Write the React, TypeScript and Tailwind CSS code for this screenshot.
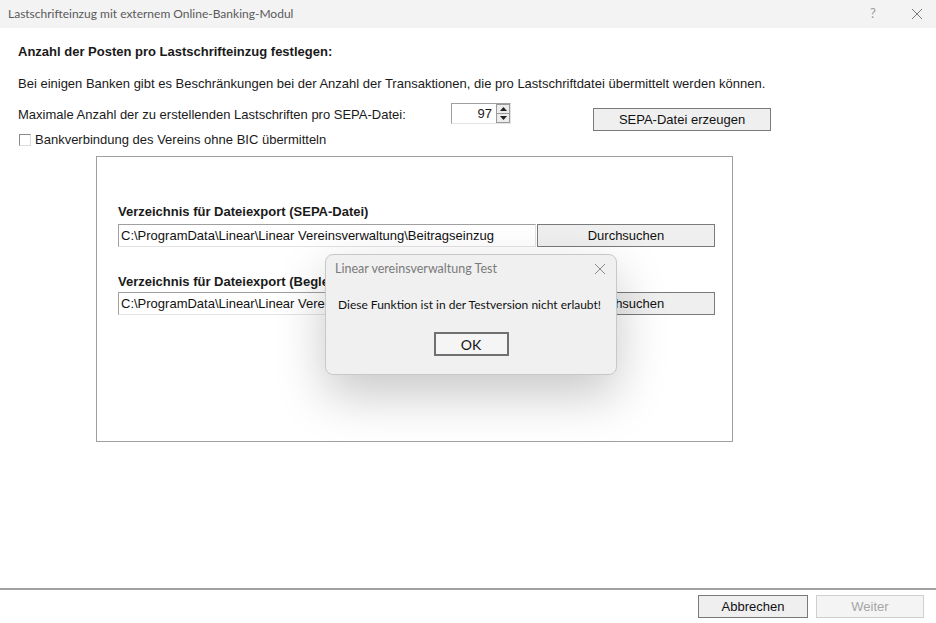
import React from "react";

const arial = { fontFamily: '"Liberation Sans", Arial, sans-serif' };
const segoe = { fontFamily: 'Lato, "Noto Sans", sans-serif' };

function WinButton({ children, className = "", disabled = false }: { children: React.ReactNode; className?: string; disabled?: boolean }) {
  return (
    <div
      className={
        "flex items-center justify-center border bg-[#efefef] text-[13px] " +
        (disabled ? "border-[#cfcfcf] text-[#a6a6a6] bg-[#f4f4f4]" : "border-[#7a7a7a] text-[#111]") +
        " " +
        className
      }
      style={arial}
    >
      {children}
    </div>
  );
}

function PathInput({ value }: { value: string }) {
  return (
    <div className="flex h-[23px] w-[418px] items-center overflow-hidden whitespace-nowrap border border-[#a0a0a0] border-b-[#e3e3e3] border-r-[#e3e3e3] bg-white pl-[2px] text-[13px] text-[#111]" style={arial}>
      {value}
    </div>
  );
}

export default function App() {
  return (
    <div className="relative flex h-[623px] w-[936px] flex-col overflow-hidden bg-white text-[#1a1a1a]">
      {/* Title bar */}
      <div className="flex h-[28px] shrink-0 items-center bg-[#f3f3f3] pl-[8px]" style={segoe}>
        <span className="whitespace-nowrap text-[12px] text-[#5a5a5a]">Lastschrifteinzug mit externem Online-Banking-Modul</span>
        <div className="ml-auto flex items-center">
          <span className="w-[46px] text-center text-[13px] text-[#9a9a9a]">?</span>
          <svg width="40" height="28" viewBox="0 0 40 28" className="text-[#7a7a7a]">
            <path d="M16 9 L26 19 M26 9 L16 19" stroke="currentColor" strokeWidth="1" />
          </svg>
        </div>
      </div>

      {/* Content */}
      <div className="flex flex-1 flex-col pl-[18px] pt-[16px]" style={arial}>
        <div className="text-[13px] font-bold leading-[16px]">Anzahl der Posten pro Lastschrifteinzug festlegen:</div>
        <div className="mt-[16px] text-[13px] leading-[16px]">
          Bei einigen Banken gibt es Beschränkungen bei der Anzahl der Transaktionen, die pro Lastschriftdatei übermittelt werden können.
        </div>
        <div className="mt-[11px] flex items-start">
          <div className="mt-[4px] w-[433px] text-[13px] leading-[16px]">Maximale Anzahl der zu erstellenden Lastschriften pro SEPA-Datei:</div>
          <div className="flex h-[21px] w-[60px] items-center border border-[#a0a0a0] border-b-[#e3e3e3] border-r-[#e3e3e3] bg-white">
            <span className="flex-1 pr-[4px] text-right text-[13px]">97</span>
            <div className="flex h-[19px] w-[14px] flex-col">
              <div className="flex h-1/2 items-center justify-center border border-[#9a9a9a] bg-[#ececec]">
                <svg width="7" height="4" viewBox="0 0 7 4"><path d="M0 4 L3.5 0 L7 4 Z" fill="#222" /></svg>
              </div>
              <div className="flex h-1/2 items-center justify-center border border-t-0 border-[#9a9a9a] bg-[#ececec]">
                <svg width="7" height="4" viewBox="0 0 7 4"><path d="M0 0 L3.5 4 L7 0 Z" fill="#222" /></svg>
              </div>
            </div>
          </div>
          <WinButton className="ml-[82px] mt-[5px] h-[23px] w-[178px]">SEPA-Datei erzeugen</WinButton>
        </div>
        <div className="mt-[1px] flex items-center">
          <div className="ml-[1px] h-[12px] w-[12px] border border-[#8a8a8a] border-b-[#dcdcdc] border-r-[#dcdcdc] bg-white" />
          <span className="ml-[4px] text-[13px] leading-[16px]">Bankverbindung des Vereins ohne BIC übermitteln</span>
        </div>

        {/* Group box */}
        <div className="ml-[78px] mt-[8px] flex h-[286px] w-[637px] flex-col border border-[#a0a0a0] pl-[21px] pt-[47px]">
          <div className="text-[13px] font-bold leading-[16px]">Verzeichnis für Dateiexport (SEPA-Datei)</div>
          <div className="mt-[4px] flex items-center">
            <PathInput value="C:\ProgramData\Linear\Linear Vereinsverwaltung\Beitragseinzug" />
            <WinButton className="ml-[1px] h-[23px] w-[178px]">Durchsuchen</WinButton>
          </div>
          <div className="mt-[27px] text-[13px] font-bold leading-[16px]">Verzeichnis für Dateiexport (Begleitzettel)</div>
          <div className="mt-[2px] flex items-center">
            <PathInput value="C:\ProgramData\Linear\Linear Vereinsverwaltung\Beitragseinzug" />
            <WinButton className="ml-[1px] h-[23px] w-[178px]">Durchsuchen</WinButton>
          </div>
        </div>
      </div>

      {/* Bottom bar */}
      <div className="flex h-[35px] shrink-0 items-center justify-end gap-[8px] border-t-2 border-[#a0a0a0] pr-[12px]">
        <WinButton className="h-[23px] w-[110px]">Abbrechen</WinButton>
        <WinButton disabled className="h-[23px] w-[108px]">Weiter</WinButton>
      </div>

      {/* Message dialog */}
      <div
        className="absolute left-[325px] top-[254px] flex h-[121px] w-[292px] flex-col rounded-[8px] border border-[#c8c8c8] bg-[#f0f0f0] shadow-[0_20px_50px_rgba(0,0,0,0.22)]"
        style={segoe}
      >
        <div className="flex h-[28px] items-center pl-[9px]">
          <span className="whitespace-nowrap text-[12.5px] text-[#7a7a7a]">Linear vereinsverwaltung Test</span>
          <svg width="14" height="14" viewBox="0 0 14 14" className="ml-auto mr-[9px]">
            <path d="M2 2 L12 12 M12 2 L2 12" stroke="#8a8a8a" strokeWidth="1" />
          </svg>
        </div>
        <div className="mt-[14px] whitespace-nowrap pl-[12px] text-[12px] leading-[16px] text-[#111]">Diese Funktion ist in der Testversion nicht erlaubt!</div>
        <div className="mt-[19px] flex justify-center">
          <div className="flex h-[24px] w-[75px] items-center justify-center border-2 border-[#707070] bg-[#f5f5f5] text-[14px] text-[#111]">OK</div>
        </div>
      </div>
    </div>
  );
}
